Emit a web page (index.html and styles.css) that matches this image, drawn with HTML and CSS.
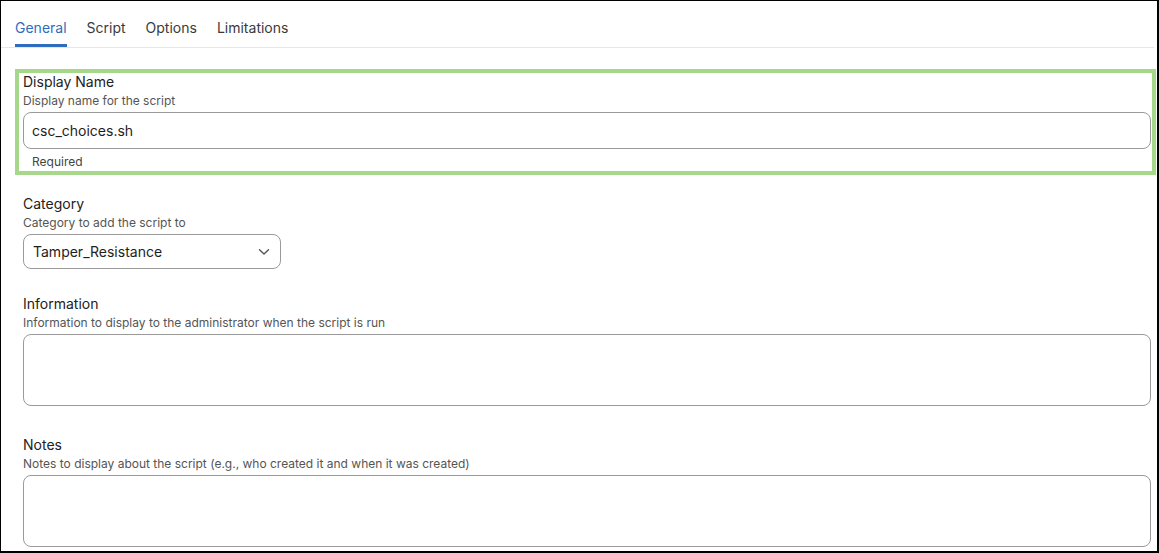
FILE: index.html
```html
<!DOCTYPE html>
<html>
<head>
<meta charset="utf-8">
<link rel="stylesheet" href="styles.css">
</head>
<body>
<div class="frame">
  <nav class="tabs">
    <span class="tab active">General</span>
    <span class="tab">Script</span>
    <span class="tab">Options</span>
    <span class="tab">Limitations</span>
  </nav>
  <form class="form">
    <div class="field highlight">
      <div class="label">Display Name</div>
      <div class="desc">Display name for the script</div>
      <div class="input text-input">csc_choices.sh</div>
      <div class="hint">Required</div>
    </div>
    <div class="field f-category">
      <div class="label">Category</div>
      <div class="desc">Category to add the script to</div>
      <div class="input select">
        <span>Tamper_Resistance</span>
        <svg class="chev" width="12" height="8" viewBox="0 0 12 8"><path d="M1.5 1.8 L6 6 L10.5 1.8" fill="none" stroke="#555" stroke-width="1.4" stroke-linecap="round" stroke-linejoin="round"/></svg>
      </div>
    </div>
    <div class="field f-info">
      <div class="label">Information</div>
      <div class="desc">Information to display to the administrator when the script is run</div>
      <div class="input area"></div>
    </div>
    <div class="field f-notes">
      <div class="label">Notes</div>
      <div class="desc">Notes to display about the script (e.g., who created it and when it was created)</div>
      <div class="input area"></div>
    </div>
  </form>
</div>
</body>
</html>
```

FILE: styles.css
```css
* { box-sizing: border-box; }
html, body { margin: 0; padding: 0; background: #fff; }
body {
  font-family: Inter, "Noto Sans", "Liberation Sans", sans-serif;
  color: #222;
  width: 1159px;
  height: 553px;
  overflow: hidden;
}
.frame {
  width: 1159px;
  height: 553px;
  border-style: solid;
  border-color: #000;
  border-width: 1px 2px 2px 1px;
  overflow: hidden;
}
.tabs {
  display: flex;
  gap: 20px;
  padding: 0 0 0 14px;
  height: 47px;
  border-bottom: 1px solid #e6e6e6;
  margin-right: 3px;
  align-items: stretch;
}
.tab {
  font-size: 14px;
  line-height: 20px;
  color: #3a3a3a;
  padding-top: 17px;
  border-bottom: 3px solid transparent;
}
.tab.active {
  color: #2f6cc0;
  border-bottom-color: #2f6cc0;
}
.form {
  padding: 21px 6px 0 22px;
}
.field { display: flex; flex-direction: column; align-items: flex-start; }
.label {
  font-size: 14px;
  line-height: 20px;
  color: #222;
}
.desc {
  font-size: 12px;
  line-height: 16px;
  color: #555;
  margin-top: 1px;
}
.input {
  border: 1px solid #9a9a9a;
  border-radius: 8px;
  background: #fff;
  width: 100%;
}
.highlight {
  border: 4px solid #a6d88b;
  margin: 0 -5px 0 -8px;
  padding: 0 1px 1px 4px;
}
.highlight .label { line-height: 18px; }
.highlight .desc { margin-top: 2px; }
.text-input {
  height: 37px;
  margin-top: 3px;
  padding: 0 8px;
  font-size: 14px;
  line-height: 35px;
  color: #1e1e1e;
}
.hint {
  font-size: 12px;
  line-height: 16px;
  color: #444;
  margin-top: 5px;
  padding-left: 9px;
}
.f-category { margin-top: 19px; }
.select {
  width: 258px;
  height: 35px;
  margin-top: 3px;
  display: flex;
  align-items: center;
  justify-content: space-between;
  padding: 0 10px 0 9px;
  font-size: 14px;
  color: #1e1e1e;
}
.chev { display: block; }
.f-info { margin-top: 25px; }
.area {
  height: 72px;
  margin-top: 3px;
}
.f-notes { margin-top: 29px; }
```
